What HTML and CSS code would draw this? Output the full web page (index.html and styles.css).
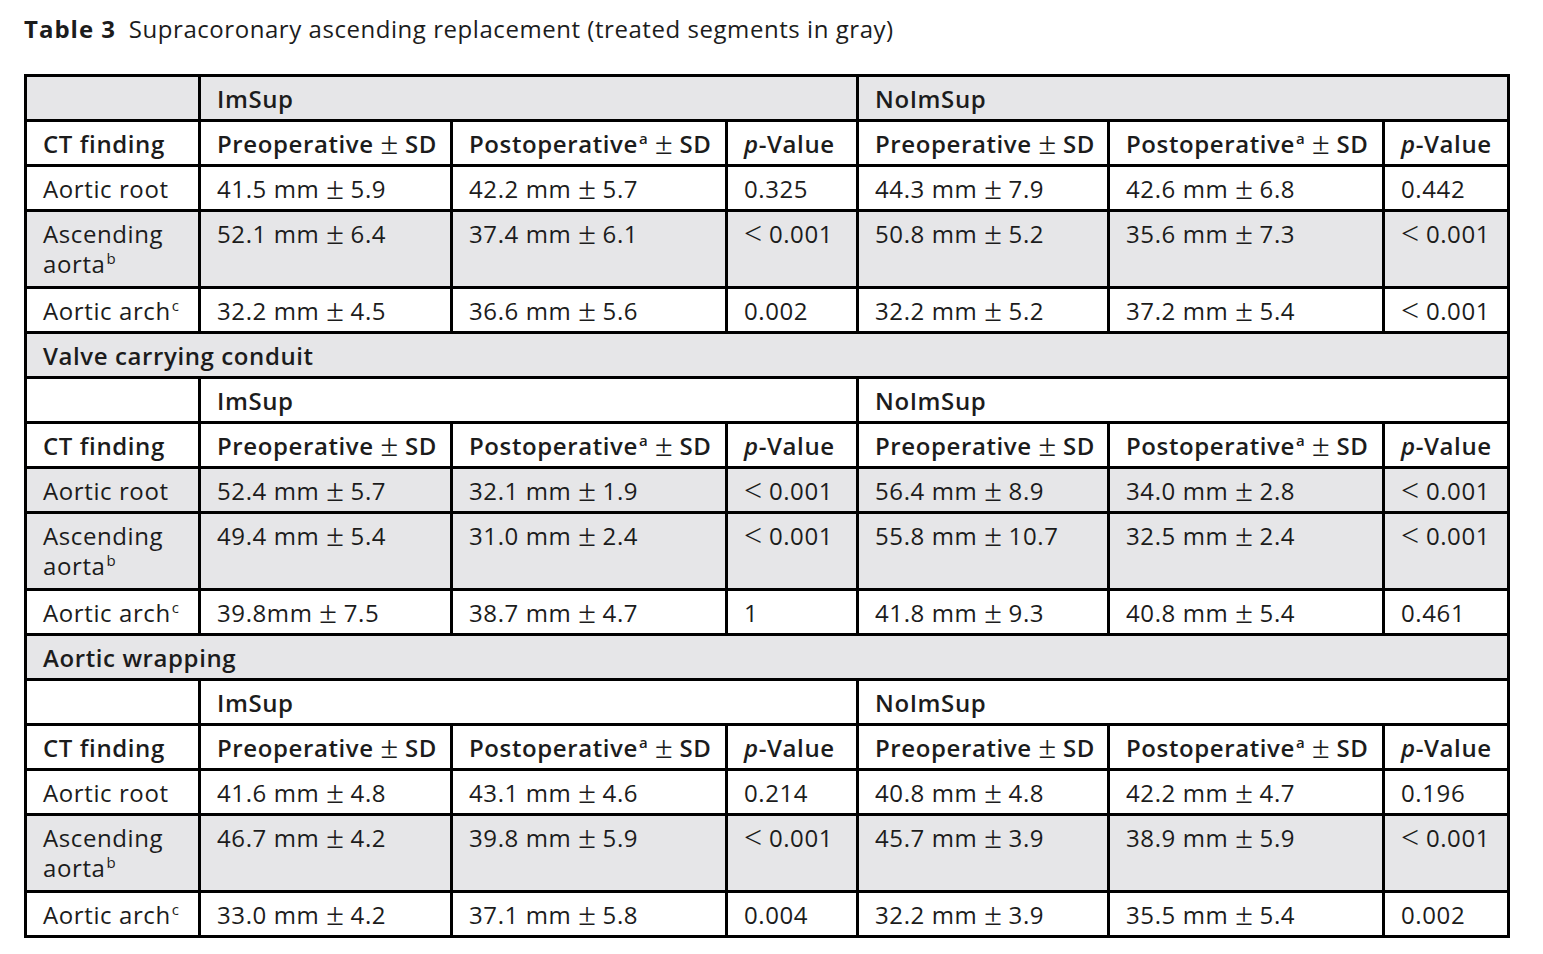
FILE: index.html
```html
<!DOCTYPE html>
<html lang="en">
<head>
<meta charset="utf-8">
<title>Table 3</title>
<link rel="stylesheet" href="styles.css">
</head>
<body>
<div class="page">
  <h1 class="caption"><span class="label">Table 3</span> Supracoronary ascending replacement (treated segments in gray)</h1>
  <table class="data">
    <colgroup>
      <col class="c1"><col class="c2"><col class="c3"><col class="c4"><col class="c5"><col class="c6"><col class="c7">
    </colgroup>
    <tbody>
      <tr class="grp gray"><td></td><td colspan="3">ImSup</td><td colspan="3">NoImSup</td></tr>
      <tr class="hdr"><td>CT finding</td><td>Preoperative <span class="m">±</span> SD</td><td>Postoperative<sup>a</sup> <span class="m">±</span> SD</td><td><i>p</i>-Value</td><td>Preoperative <span class="m">±</span> SD</td><td>Postoperative<sup>a</sup> <span class="m">±</span> SD</td><td><i>p</i>-Value</td></tr>
      <tr class="row"><td>Aortic root</td><td>41.5 mm <span class="m">±</span> 5.9</td><td>42.2 mm <span class="m">±</span> 5.7</td><td>0.325</td><td>44.3 mm <span class="m">±</span> 7.9</td><td>42.6 mm <span class="m">±</span> 6.8</td><td>0.442</td></tr>
      <tr class="row tall gray"><td>Ascending aorta<sup>b</sup></td><td>52.1 mm <span class="m">±</span> 6.4</td><td>37.4 mm <span class="m">±</span> 6.1</td><td><span class="m">&lt;</span> 0.001</td><td>50.8 mm <span class="m">±</span> 5.2</td><td>35.6 mm <span class="m">±</span> 7.3</td><td><span class="m">&lt;</span> 0.001</td></tr>
      <tr class="row"><td>Aortic arch<sup>c</sup></td><td>32.2 mm <span class="m">±</span> 4.5</td><td>36.6 mm <span class="m">±</span> 5.6</td><td>0.002</td><td>32.2 mm <span class="m">±</span> 5.2</td><td>37.2 mm <span class="m">±</span> 5.4</td><td><span class="m">&lt;</span> 0.001</td></tr>

      <tr class="section gray"><td colspan="7">Valve carrying conduit</td></tr>
      <tr class="grp"><td></td><td colspan="3">ImSup</td><td colspan="3">NoImSup</td></tr>
      <tr class="hdr"><td>CT finding</td><td>Preoperative <span class="m">±</span> SD</td><td>Postoperative<sup>a</sup> <span class="m">±</span> SD</td><td><i>p</i>-Value</td><td>Preoperative <span class="m">±</span> SD</td><td>Postoperative<sup>a</sup> <span class="m">±</span> SD</td><td><i>p</i>-Value</td></tr>
      <tr class="row gray"><td>Aortic root</td><td>52.4 mm <span class="m">±</span> 5.7</td><td>32.1 mm <span class="m">±</span> 1.9</td><td><span class="m">&lt;</span> 0.001</td><td>56.4 mm <span class="m">±</span> 8.9</td><td>34.0 mm <span class="m">±</span> 2.8</td><td><span class="m">&lt;</span> 0.001</td></tr>
      <tr class="row tall gray"><td>Ascending aorta<sup>b</sup></td><td>49.4 mm <span class="m">±</span> 5.4</td><td>31.0 mm <span class="m">±</span> 2.4</td><td><span class="m">&lt;</span> 0.001</td><td>55.8 mm <span class="m">±</span> 10.7</td><td>32.5 mm <span class="m">±</span> 2.4</td><td><span class="m">&lt;</span> 0.001</td></tr>
      <tr class="row"><td>Aortic arch<sup>c</sup></td><td>39.8mm <span class="m">±</span> 7.5</td><td>38.7 mm <span class="m">±</span> 4.7</td><td>1</td><td>41.8 mm <span class="m">±</span> 9.3</td><td>40.8 mm <span class="m">±</span> 5.4</td><td>0.461</td></tr>

      <tr class="section gray"><td colspan="7">Aortic wrapping</td></tr>
      <tr class="grp"><td></td><td colspan="3">ImSup</td><td colspan="3">NoImSup</td></tr>
      <tr class="hdr"><td>CT finding</td><td>Preoperative <span class="m">±</span> SD</td><td>Postoperative<sup>a</sup> <span class="m">±</span> SD</td><td><i>p</i>-Value</td><td>Preoperative <span class="m">±</span> SD</td><td>Postoperative<sup>a</sup> <span class="m">±</span> SD</td><td><i>p</i>-Value</td></tr>
      <tr class="row"><td>Aortic root</td><td>41.6 mm <span class="m">±</span> 4.8</td><td>43.1 mm <span class="m">±</span> 4.6</td><td>0.214</td><td>40.8 mm <span class="m">±</span> 4.8</td><td>42.2 mm <span class="m">±</span> 4.7</td><td>0.196</td></tr>
      <tr class="row tall gray"><td>Ascending aorta<sup>b</sup></td><td>46.7 mm <span class="m">±</span> 4.2</td><td>39.8 mm <span class="m">±</span> 5.9</td><td><span class="m">&lt;</span> 0.001</td><td>45.7 mm <span class="m">±</span> 3.9</td><td>38.9 mm <span class="m">±</span> 5.9</td><td><span class="m">&lt;</span> 0.001</td></tr>
      <tr class="row"><td>Aortic arch<sup>c</sup></td><td>33.0 mm <span class="m">±</span> 4.2</td><td>37.1 mm <span class="m">±</span> 5.8</td><td>0.004</td><td>32.2 mm <span class="m">±</span> 3.9</td><td>35.5 mm <span class="m">±</span> 5.4</td><td>0.002</td></tr>
    </tbody>
  </table>
</div>
</body>
</html>
```
FILE: styles.css
```css
html, body {
  margin: 0;
  padding: 0;
  background: #ffffff;
}
body {
  font-family: "Open Sans", "DejaVu Sans", sans-serif;
  color: #1c1c1c;
}
.page {
  padding: 13px 0 0 24px;
}
.caption {
  margin: 0 0 29px 0;
  font-size: 24px;
  font-weight: 400;
  line-height: 32px;
  letter-spacing: 0.55px;
}
.caption .label {
  font-weight: 700;
  letter-spacing: 1px;
  margin-right: 6px;
}
.data {
  border-collapse: collapse;
  table-layout: fixed;
  width: 1483px;
  font-size: 24px;
  line-height: 30px;
  letter-spacing: 0.6px;
}
.c1 { width: 174px; }
.c2 { width: 252px; }
.c3 { width: 275px; }
.c4 { width: 131px; }
.c5 { width: 251px; }
.c6 { width: 275px; }
.c7 { width: 125px; }
.data td {
  border: 3px solid #000;
  padding: 7px 8px 5px 16px;
  vertical-align: top;
  white-space: nowrap;
  height: 30px;
}
.data .tall td {
  white-space: normal;
  height: 62px;
}
.data .tall td:first-child {
  padding-right: 20px;
}
.gray td {
  background: #e6e6e8;
}
.grp td, .hdr td, .section td {
  font-weight: 600;
}
.data i {
  font-style: italic;
}
.m {
  font-family: "Liberation Serif", "DejaVu Serif", serif;
  font-weight: 400;
  font-size: 32px;
  line-height: 0;
  letter-spacing: 0;
  vertical-align: -1px;
}
sup {
  font-size: 15px;
  line-height: 0;
  vertical-align: 9px;
  margin-left: 1px;
}
```
